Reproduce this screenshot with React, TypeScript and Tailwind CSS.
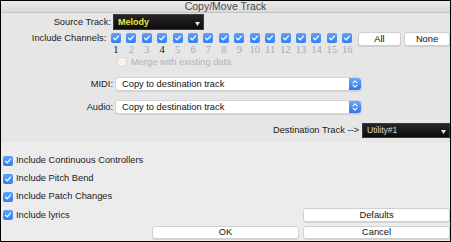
import React from 'react';

const font = { fontFamily: '"Liberation Sans", Arial, sans-serif' };

const Check = ({ on = true, disabled = false }: { on?: boolean; disabled?: boolean }) => (
  <span
    className={`flex h-[10px] w-[10px] shrink-0 items-center justify-center rounded-[2px] ${
      disabled
        ? 'border border-[#d8d8d8] bg-[#f3f3f3]'
        : on
        ? 'bg-gradient-to-b from-[#5ea2fb] to-[#2f7ff2]'
        : 'border border-[#aaa] bg-white'
    }`}
  >
    {on && !disabled && (
      <svg width="8" height="8" viewBox="0 0 8 8">
        <path d="M1.6 4.2 L3.3 5.8 L6.4 2.2" fill="none" stroke="white" strokeWidth="1.3" strokeLinecap="round" strokeLinejoin="round" />
      </svg>
    )}
  </span>
);

const DarkDrop = ({ text, className, textClass }: { text: string; className: string; textClass: string }) => (
  <div className={`relative flex shrink-0 items-center border border-[#3a3a3a] bg-gradient-to-b from-[#262626] to-[#0c0c0c] pl-[4px] ${className}`}>
    <span className={textClass}>{text}</span>
    <svg className="absolute right-[3px] bottom-[3px]" width="5" height="4" viewBox="0 0 5 4">
      <path d="M0 0 H5 L2.5 4 Z" fill="#e8e8e8" />
    </svg>
  </div>
);

const Select = ({ text }: { text: string }) => (
  <div className="flex h-[14px] w-[247px] items-stretch rounded-[3px] border border-[#d2d2d2] bg-white shadow-[0_1px_0_rgba(0,0,0,0.08)]">
    <span className="flex-1 pl-[6px] text-[9.3px] leading-[12px] text-[#111]">{text}</span>
    <span className="flex w-[12px] items-center justify-center rounded-r-[3px] bg-gradient-to-b from-[#6aaaf8] to-[#2f74ea]">
      <svg width="6" height="10" viewBox="0 0 6 10">
        <path d="M1 3.8 L3 1.8 L5 3.8 M1 6.2 L3 8.2 L5 6.2" fill="none" stroke="white" strokeWidth="1.1" strokeLinecap="round" strokeLinejoin="round" />
      </svg>
    </span>
  </div>
);

const Btn = ({ label, className }: { label: string; className: string }) => (
  <div className={`flex shrink-0 items-center justify-center rounded-[3px] border border-[#d0d0d0] bg-white text-[9.3px] leading-[11px] text-[#111] shadow-[0_1px_0_rgba(0,0,0,0.1)] ${className}`}>
    {label}
  </div>
);

const channels = Array.from({ length: 16 }, (_, i) => i + 1);

const Option = ({ label, className }: { label: string; className: string }) => (
  <div className={`flex h-[11px] items-center ${className}`}>
    <Check />
    <span className="ml-[3px]">{label}</span>
  </div>
);

export default function App() {
  return (
    <div style={font} className="flex h-[242px] w-[451px] flex-col overflow-hidden border border-black bg-[#ececec] text-[9.3px] leading-[11px] text-[#1a1a1a]">
      {/* title bar */}
      <div className="flex h-[12px] shrink-0 items-center justify-center border-b border-[#c4c4c4] bg-gradient-to-b from-[#ececec] to-[#d9d9d9] text-[10.5px] leading-[11px] text-[#4a4a4a]">
        Copy/Move Track
      </div>

      {/* upper panel */}
      <div className="flex h-[129px] shrink-0 flex-col bg-[#e6e6e6]">
        <div className="mt-[1px] flex h-[16px] items-center">
          <span className="w-[112px] pr-[2px] text-right">Source Track:</span>
          <DarkDrop text="Melody" className="h-[16px] w-[91px]" textClass="text-[9px] font-bold text-[#e9e64a]" />
        </div>

        <div className="mt-[2px] flex items-start">
          <span className="mt-[1px] w-[113px] pr-[2px] text-right">Include Channels:</span>
          <div className="flex">
            {channels.map((n) => (
              <div key={n} className="flex w-[15.43px] flex-col items-center">
                <span className="mt-[1px]"><Check /></span>
                <span
                  style={{ fontFamily: '"Liberation Serif", serif' }}
                  className={`mt-[1px] text-[10.5px] leading-[11px] ${n === 1 || n === 4 ? 'text-[#111]' : 'text-[#a9a9a9]'}`}
                >
                  {n}
                </span>
              </div>
            ))}
          </div>
          <div className="ml-[3px] flex gap-[3px]">
            <Btn label="All" className="h-[14px] w-[43px]" />
            <Btn label="None" className="h-[14px] w-[46px]" />
          </div>
        </div>

        <div className="mt-[2px] flex h-[10px] items-center pl-[116px]">
          <Check on={false} disabled />
          <span className="ml-[4px] text-[#b3b3b3]">Merge with existing data</span>
        </div>

        <div className="mt-[10px] flex items-center">
          <span className="w-[114px] pr-[2px] text-right">MIDI:</span>
          <Select text="Copy to destination track" />
        </div>

        <div className="mt-[9px] flex items-center">
          <span className="w-[114px] pr-[2px] text-right">Audio:</span>
          <Select text="Copy to destination track" />
        </div>

        <div className="mt-[9px] flex items-center justify-end">
          <span className="mr-[3px]">Destination Track --&gt;</span>
          <DarkDrop text="Utility#1" className="h-[15px] w-[88px]" textClass="text-[8.5px] text-[#dcdcdc]" />
        </div>
      </div>

      {/* lower panel */}
      <div className="flex flex-1 flex-col pl-[2px]">
        <Option label="Include Continuous Controllers" className="mt-[13px]" />
        <Option label="Include Pitch Bend" className="mt-[7px]" />
        <Option label="Include Patch Changes" className="mt-[7px]" />
        <div className="mt-[6px] flex h-[14px] items-center justify-between">
          <Option label="Include lyrics" className="" />
          <Btn label="Defaults" className="h-[14px] w-[147px]" />
        </div>
        <div className="mt-[4px] flex justify-end gap-[4px]">
          <Btn label="OK" className="h-[13px] w-[147px]" />
          <Btn label="Cancel" className="h-[13px] w-[147px]" />
        </div>
      </div>
    </div>
  );
}
